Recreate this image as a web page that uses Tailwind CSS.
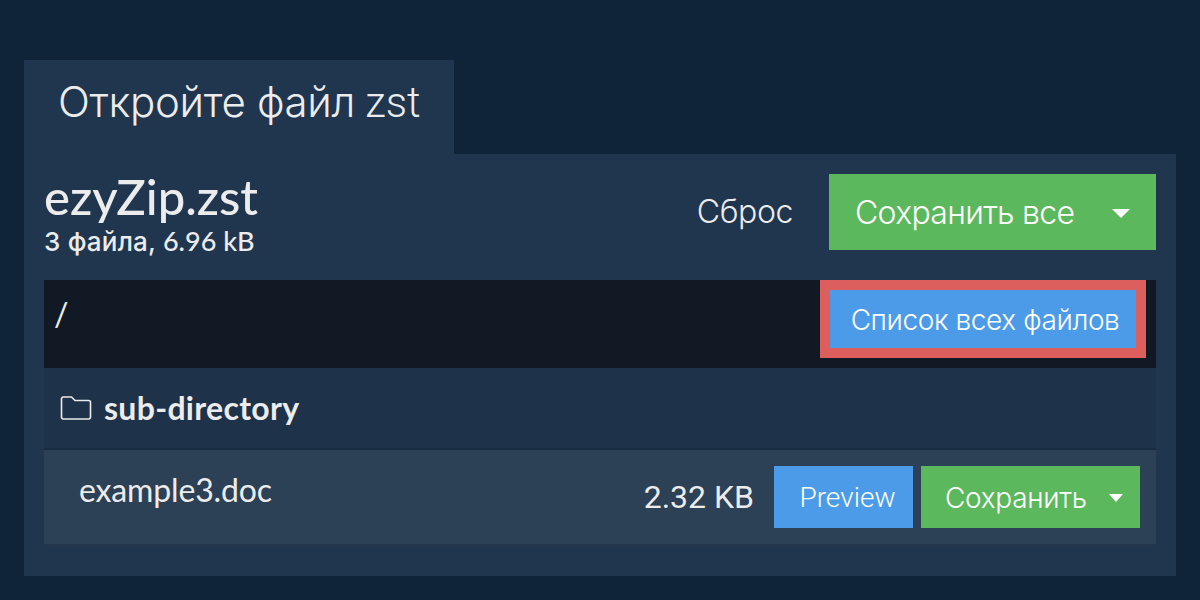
<!DOCTYPE html>
<html lang="en">
<head>
  <meta charset="UTF-8" />
  <title>ezyZip</title>
  <script src="https://cdn.jsdelivr.net/npm/@tailwindcss/browser@4"></script>
</head>
<body class="bg-[#0f2439] text-[#ececec] h-[600px] overflow-hidden font-['Lato',sans-serif]">
  <div class="pt-[60px] px-6">
    <div class="w-[430px] h-[94px] bg-[#20364f] pl-[34px] pt-[16px] text-[42px] leading-[52px] font-light font-['Roboto',sans-serif]"><span class="font-['Inter',sans-serif] tracking-[-0.3px]">Откройте файл</span> zst</div>

    <div class="h-[422px] bg-[#20364f] px-5 pt-5">
      <div class="flex items-start h-[106px]">
        <div class="-mt-[4px]">
          <div class="text-[49px] leading-[52px] font-medium">ezyZip.zst</div>
          <div class="text-[27px] leading-[30px] font-medium mt-[4px]"><span class="font-['Inter',sans-serif] text-[26px] tracking-[0.2px]">3 файла,</span> 6.96 kB</div>
        </div>
        <div class="ml-auto flex items-center">
          <span class="text-[32px] font-light font-['Inter',sans-serif] mr-9 tracking-[-0.4px]">Сброс</span>
          <button class="w-[327px] h-[76px] bg-[#5cb85c] text-white text-[32px] font-light font-['Inter',sans-serif] tracking-[-0.7px] flex items-center pl-[26px] pt-[2px]">
            Сохранить все
            <span class="ml-auto mr-[26px] w-0 h-0 border-x-[9px] border-x-transparent border-t-[9px] border-t-white"></span>
          </button>
        </div>
      </div>

      <div class="h-[88px] bg-[#111a24] flex items-start pl-[10px]">
        <span class="text-[32px] leading-[68px]">/</span>
        <div class="ml-auto mr-[10px] border-[10px] border-[#dd5f5d]">
          <button class="block w-[306px] h-[58px] bg-[#4c9be8] text-white text-[28px] font-light font-['Inter',sans-serif] tracking-[-0.4px] pl-1 pt-[2px]">Список всех файлов</button>
        </div>
      </div>

      <div class="h-[82px] bg-[#1e3249] border-b-2 border-[#1a2c42] flex items-center pl-4 gap-3">
        <svg class="w-[32px] h-[28px]" viewBox="0 0 32 28" fill="none" stroke="currentColor" stroke-width="1.6" stroke-linejoin="round">
          <path d="M1.5 5.5 V23 a2 2 0 0 0 2 2 H28.5 a2 2 0 0 0 2 -2 V8.5 a2 2 0 0 0 -2 -2 H15 L11.5 3 H3.5 a2 2 0 0 0 -2 2.5 Z" />
        </svg>
        <span class="text-[32px] font-bold leading-none tracking-[0.3px]">sub-directory</span>
      </div>

      <div class="h-[96px] bg-[#2c4056] border-b-2 border-[#23364c] flex items-start pl-[35px] pr-4">
        <span class="text-[32px] leading-[80px] tracking-[-0.15px]">example3.doc</span>
        <div class="ml-auto flex items-center pt-4">
          <span class="text-[32px] mr-5 font-['Roboto',sans-serif]">2.32 KB</span>
          <button class="w-[139px] h-[62px] bg-[#4c9be8] text-white text-[28px] font-light font-['Roboto',sans-serif] mr-2 pl-2 pt-[2px]">Preview</button>
          <button class="w-[219px] h-[62px] bg-[#5cb85c] text-white text-[28px] font-light font-['Inter',sans-serif] tracking-[-0.3px] flex items-center pl-[24px] pt-[2px]">
            Сохранить
            <span class="ml-auto mr-[17px] w-0 h-0 border-x-[7px] border-x-transparent border-t-[8px] border-t-white"></span>
          </button>
        </div>
      </div>
    </div>
  </div>
</body>
</html>
